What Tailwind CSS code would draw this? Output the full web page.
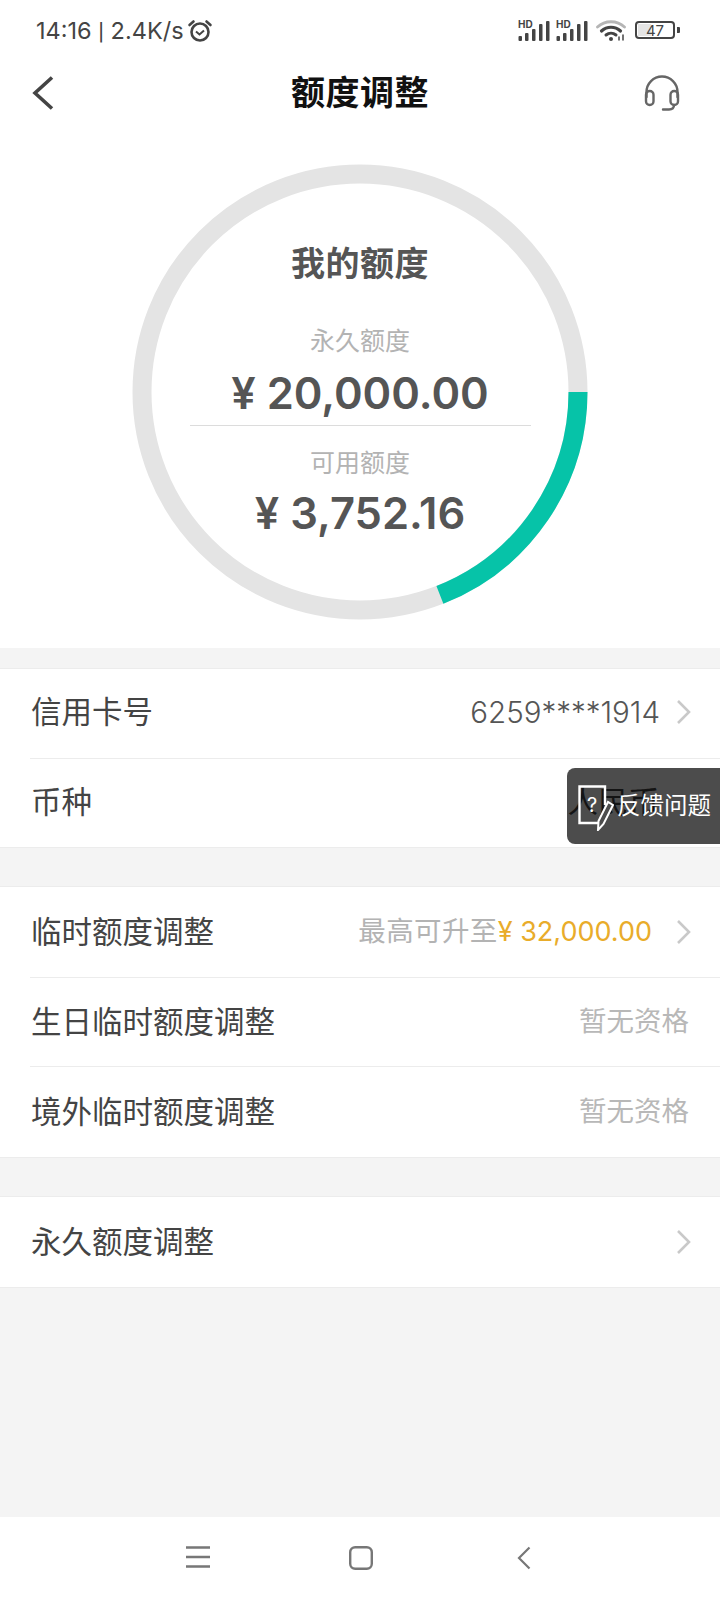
<!DOCTYPE html>
<html lang="zh-CN">

<head>
    <meta charset="UTF-8">
    <meta name="viewport" content="width=device-width, initial-scale=1.0">
    <title>额度调整</title>
    <script src="https://cdn.jsdelivr.net/npm/@tailwindcss/browser@4"></script>
</head>

<body class="font-['Inter','Noto_Sans_CJK_SC',sans-serif]">
    <div class="relative w-[720px] h-[1600px] bg-[#f4f4f4] flex flex-col overflow-hidden">

        <div class="bg-white">
            <!-- status bar -->
            <div class="h-[60px] pl-[36px] pr-[40px] flex items-center justify-between">
                <div class="flex items-center gap-[3px] pt-[2px] text-[23.5px] leading-none text-[#444]">
                    <span>14:16 <span class="font-['Roboto']">|</span> 2.4K/s</span>
                    <svg width="26" height="24" viewBox="0 0 26 24" fill="none" stroke="#444" stroke-width="2.6">
                        <circle cx="13" cy="13" r="8.5" />
                        <path d="M9 12.500l3.500 3 4.500-4" stroke-width="2" />
                        <path d="M2.500 6l4-3.500M23.500 6l-4-3.500" stroke-linecap="round" />
                    </svg>
                </div>
                <div class="flex items-center">
                    <svg width="32" height="24" viewBox="0 -1 32 24" fill="#444">
                        <text x="0" y="9" font-size="10" font-weight="700" font-family="Inter">HD</text>
                        <rect x="0.500" y="17" width="3.500" height="5" rx="1" />
                        <rect x="7" y="14" width="3.500" height="8" rx="1" />
                        <rect x="14" y="10" width="3.500" height="12" rx="1" />
                        <rect x="21" y="5" width="3.500" height="17" rx="1" />
                        <rect x="28" y="2" width="3.500" height="20" rx="1" />
                    </svg>
                    <svg class="ml-[6px]" width="32" height="24" viewBox="0 -1 32 24" fill="#444">
                        <text x="0" y="9" font-size="10" font-weight="700" font-family="Inter">HD</text>
                        <rect x="0.500" y="17" width="3.500" height="5" rx="1" />
                        <rect x="7" y="14" width="3.500" height="8" rx="1" />
                        <rect x="14" y="10" width="3.500" height="12" rx="1" />
                        <rect x="21" y="5" width="3.500" height="17" rx="1" />
                        <rect x="28" y="2" width="3.500" height="20" rx="1" />
                    </svg>
                    <svg class="ml-[8px]" width="30" height="24" viewBox="0 0 30 24" fill="none" stroke-linecap="round">
                        <path d="M1.500 9C9 2 21 2 28.500 9" stroke="#b5b5b5" stroke-width="2.800" />
                        <path d="M5.500 13C11 8 19 8 24.500 13" stroke="#444" stroke-width="3.200" />
                        <path d="M10 17c3-2.500 7-2.500 10 0" stroke="#444" stroke-width="3" />
                        <circle cx="15" cy="21" r="2" fill="#444" />
                        <path d="M23 22v-3M27 22v-5" stroke="#444" stroke-width="1.500" />
                    </svg>
                    <div class="ml-[9px] flex items-center">
                        <div class="relative w-[40px] h-[18px] rounded-[4px] border-2 border-[#444] flex items-center justify-center text-[15px] leading-none text-[#444] overflow-hidden">
                            <div class="absolute left-[1px] top-[1px] bottom-[1px] w-[13px] bg-[#e4e4e4]"></div>
                            <span class="relative">47</span>
                        </div>
                        <div class="ml-[2px] w-[3px] h-[6px] bg-[#444] rounded-r-[1px]"></div>
                    </div>
                </div>
            </div>

            <!-- header -->
            <div class="h-[66px] px-[32px] flex items-center">
                <div class="flex-1">
                    <svg width="22" height="34" viewBox="0 0 22 34" fill="none" stroke="#444" stroke-width="3.6">
                        <path d="M20 1.500L3 17l17 15.500" />
                    </svg>
                </div>
                <span class="text-[34px] tracking-[0.5px] leading-none font-bold text-[#111]">额度调整</span>
                <div class="flex-1 flex justify-end">
                    <svg class="mr-[8px]" width="36" height="36" viewBox="0 0 36 36" fill="none" stroke="#666" stroke-width="2.4" stroke-linecap="round">
                        <path d="M2.500 22V17a15.500 15.500 0 0 1 31 0v5" />
                        <rect x="2" y="16" width="7.500" height="14" rx="3.700" />
                        <rect x="26.500" y="16" width="7.500" height="14" rx="3.700" />
                        <path d="M30 30c0 3-2 4.500-5 4.500h-6" />
                    </svg>
                </div>
            </div>

            <!-- ring -->
            <div class="h-[522px] pt-[38px] flex justify-center">
                <div class="grid w-[456px] h-[456px]">
                    <svg class="col-start-1 row-start-1" width="456" height="456" viewBox="0 0 456 456" fill="none">
                        <circle cx="228" cy="228" r="218" stroke="#e4e4e4" stroke-width="19" />
                        <path d="M446 228A218 218 0 0 1 307.900 430.900" stroke="#06c3a8" stroke-width="19" />
                    </svg>
                    <div class="col-start-1 row-start-1 flex flex-col items-center pt-[80px]">
                        <div class="text-[34px] tracking-[0.5px] leading-[40px] font-bold text-[#555]">我的额度</div>
                        <div class="mt-[41px] text-[25px] leading-[32px] text-[#b3b3b3]">永久额度</div>
                        <div class="mt-[9px] text-[43.5px] leading-[54px] font-semibold text-[#555]">¥ 20,000.00</div>
                        <div class="mt-[5px] w-[341px] h-px bg-[#dcdcdc]"></div>
                        <div class="mt-[21px] text-[25px] leading-[32px] text-[#b3b3b3]">可用额度</div>
                        <div class="mt-[7px] text-[43.5px] leading-[54px] font-semibold text-[#555]">¥ 3,752.16</div>
                    </div>
                </div>
            </div>
        </div>

        <!-- card info -->
        <div class="mt-[20px] bg-white border-y border-[#ececec]">
            <div class="h-[89px] pl-[31px] pr-[28px] pb-[3px] flex items-center justify-between text-[30.5px] text-[#444]">
                <span>信用卡号</span>
                <div class="flex items-center">
                    <span class="text-[29.5px] font-light text-[#555]">6259****1914</span>
                    <svg class="ml-[16px]" width="16" height="26" viewBox="0 0 16 26" fill="none" stroke="#c9c9c9" stroke-width="2.6">
                        <path d="M2 2l11 11L2 24" />
                    </svg>
                </div>
            </div>
            <div class="ml-[30px] h-px bg-[#ececec]"></div>
            <div class="h-[88px] pl-[31px] pr-[61px] pb-[3px] flex items-center justify-between text-[30.5px] text-[#444]">
                <span>币种</span>
                <span>人民币</span>
            </div>
        </div>

        <!-- temporary limits -->
        <div class="mt-[38px] bg-white border-y border-[#ececec]">
            <div class="h-[90px] pl-[31px] pr-[28px] flex items-center justify-between text-[30.5px] text-[#444]">
                <span>临时额度调整</span>
                <div class="flex items-center">
                    <span class="text-[27.5px] tracking-[0.4px] text-[#b3b3b3]">最高可升至</span>
                    <span class="text-[27px] text-[#e9ac2a]">¥ 32,000.00</span>
                    <svg class="ml-[24px]" width="16" height="26" viewBox="0 0 16 26" fill="none" stroke="#c9c9c9" stroke-width="2.6">
                        <path d="M2 2l11 11L2 24" />
                    </svg>
                </div>
            </div>
            <div class="ml-[30px] h-px bg-[#ececec]"></div>
            <div class="h-[88px] pl-[31px] pr-[31px] flex items-center justify-between text-[30.5px] text-[#444]">
                <span>生日临时额度调整</span>
                <span class="text-[27.5px] text-[#b8b8b8]">暂无资格</span>
            </div>
            <div class="ml-[30px] h-px bg-[#ececec]"></div>
            <div class="h-[90px] pl-[31px] pr-[31px] flex items-center justify-between text-[30.5px] text-[#444]">
                <span>境外临时额度调整</span>
                <span class="text-[27.5px] text-[#b8b8b8]">暂无资格</span>
            </div>
        </div>

        <!-- permanent limit -->
        <div class="mt-[38px] bg-white border-y border-[#ececec]">
            <div class="h-[90px] pl-[31px] pr-[28px] flex items-center justify-between text-[30.5px] text-[#444]">
                <span>永久额度调整</span>
                <svg width="16" height="26" viewBox="0 0 16 26" fill="none" stroke="#c9c9c9" stroke-width="2.6">
                    <path d="M2 2l11 11L2 24" />
                </svg>
            </div>
        </div>

        <!-- nav bar -->
        <div class="mt-auto h-[83px] bg-white flex items-start pt-[29px] pl-[186px]">
            <svg width="24" height="22" viewBox="0 0 24 22" fill="none" stroke="#777" stroke-width="2.4">
                <path d="M0 1.500h24M0 11h24M0 20.500h24" />
            </svg>
            <svg class="ml-[139px]" width="24" height="24" viewBox="0 0 24 24" fill="none" stroke="#777" stroke-width="2.4">
                <rect x="1.200" y="1.200" width="21.600" height="21.600" rx="5" />
            </svg>
            <svg class="ml-[144px]" width="14" height="24" viewBox="0 0 14 24" fill="none" stroke="#777" stroke-width="2.2">
                <path d="M12.500 1.500L2 12l10.500 10.500" />
            </svg>
        </div>

        <!-- feedback float -->
        <div class="absolute left-[567px] top-[768px] w-[153px] h-[76px] bg-black/70 rounded-l-[8px] flex items-center">
            <svg class="ml-[11px] shrink-0" width="36" height="50" viewBox="0 0 36 50" fill="none" stroke="white">
                <path d="M21 42H1.500V5.500h25.500V24" stroke-width="2.400" />
                <text x="9" y="31" font-size="20" fill="white" stroke="none" font-family="Inter">?</text>
                <path d="M20 49l.5-9L30 21l5 3-9.500 19z" stroke-width="2" fill="#4d4d4d" />
            </svg>
            <span class="ml-[3px] text-[23.5px] leading-none text-white whitespace-nowrap">反馈问题</span>
        </div>
    </div>
</body>

</html>
